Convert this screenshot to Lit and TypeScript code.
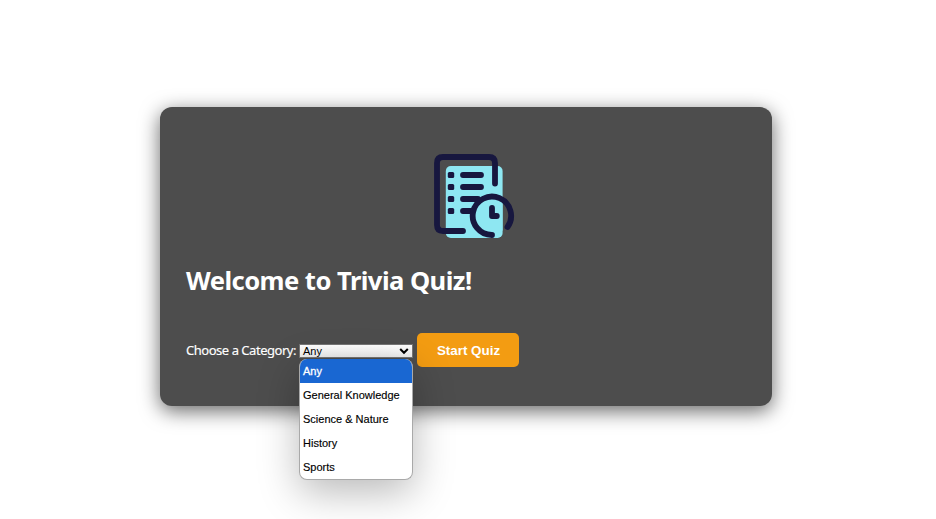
import { LitElement, html, css } from "lit";
import { customElement, property } from "lit/decorators.js";
import { classMap } from "lit/directives/class-map.js";

@customElement("quiz-logo")
class QuizLogo extends LitElement {
  static styles = css`
    :host { display: block; width: 100px; height: 100px; }
    svg { display: block; }
    .page { fill: #8ee7f2; }
    .dot { fill: #17173f; }
    .line { fill: none; stroke: #17173f; stroke-width: 5.8; stroke-linecap: round; stroke-linejoin: round; }
  `;
  render() {
    return html`<svg width="100" height="100" viewBox="0 0 100 100">
      <rect class="page" x="21.8" y="21" width="56.8" height="72" rx="5"></rect>
      <path class="line" d="M39 86H19Q13 86 13 80V18Q13 12 19 12H65Q71 12 71 18V38.5"></path>
      <rect class="dot" x="23.8" y="27" width="6.4" height="6" rx="1.5"></rect>
      <rect class="dot" x="23.8" y="39" width="6.4" height="6" rx="1.5"></rect>
      <rect class="dot" x="23.8" y="51" width="6.4" height="6" rx="1.5"></rect>
      <rect class="dot" x="23.8" y="63" width="6.4" height="6" rx="1.5"></rect>
      <path class="line" d="M39 30H57M39 42H57M39 54H54M39 66H48"></path>
      <path class="page" d="M78.6 56.2A18 18 0 1 0 78.6 85.4Z"></path>
      <path class="line" d="M68 90A19.2 19.2 0 1 1 83.5 82M68 63V71H72.8"></path>
    </svg>`;
  }
}

@customElement("category-select")
class CategorySelect extends LitElement {
  @property({ type: Array }) options: string[] = [];
  @property() value = "";
  static styles = css`
    :host { display: block; position: relative; width: 114px; height: 14px; font-family: "Liberation Sans", Arial, sans-serif; font-size: 11px; color: #000; }
    .field { box-sizing: border-box; height: 14px; display: flex; align-items: center; justify-content: space-between; padding: 0 3px 0 3px; border: 1px solid #767676; background: linear-gradient(#fff, #eee); line-height: 12px; }
    .menu { position: absolute; top: 15px; left: 0; width: 114px; box-sizing: border-box; background: #fff; border: 1px solid #a9a9a9; border-top: 0; border-radius: 8px; overflow: hidden; box-shadow: 0 12px 40px rgba(0, 0, 0, 0.28); }
    .option { height: 24px; line-height: 24px; padding-left: 3px; white-space: nowrap; -webkit-text-stroke: 0.15px currentColor; }
    .selected { background: #1967d2; color: #fff; -webkit-text-stroke-width: 0.3px; }
  `;
  render() {
    return html`<div class="field">
        <span>${this.value}</span>
        <svg width="10" height="8" viewBox="0 0 10 8"><path d="M1.2 2L5 5.8 8.8 2" fill="none" stroke="#000" stroke-width="2"></path></svg>
      </div>
      <div class="menu">
        ${this.options.map((o) => html`<div class=${classMap({ option: true, selected: o === this.value })}>${o}</div>`)}
      </div>`;
  }
}

@customElement("app-root")
class AppRoot extends LitElement {
  private categories = ["Any", "General Knowledge", "Science & Nature", "History", "Sports"];
  static styles = css`
    :host { display: flex; justify-content: center; box-sizing: border-box; height: 519px; padding: 107px 4px 0 0; background: #fff; overflow: hidden; font-family: "Noto Sans", "Open Sans", sans-serif; color: #fff; }
    .card { box-sizing: border-box; width: 612px; height: 299px; padding: 38px 26px 0; border-radius: 12px; background: #4d4d4d; box-shadow: 0 5px 20px rgba(0, 0, 0, 0.6); }
    .logo { margin: 0 auto 0 238px; }
    h1 { margin: 17px 0 0; font-size: 25.6px; line-height: 38px; font-weight: 700; letter-spacing: -0.55px; white-space: nowrap; }
    .controls { display: flex; align-items: center; margin-top: 33px; height: 34px; }
    label { width: 113px; font-size: 13px; letter-spacing: -0.47px; white-space: nowrap; -webkit-text-stroke: 0.15px currentColor; }
    category-select { margin-top: 1px; }
    button { width: 102px; height: 34px; margin-left: 4px; padding: 0 0 0 1px; border: 0; border-radius: 5px; background: #f39c12; color: #fff; font: bold 13.4px "Liberation Sans", Arial, sans-serif; }
  `;
  render() {
    return html`<main class="card">
      <quiz-logo class="logo"></quiz-logo>
      <h1>Welcome to Trivia Quiz!</h1>
      <div class="controls">
        <label>Choose a Category:</label>
        <category-select .options=${this.categories} value="Any"></category-select>
        <button>Start Quiz</button>
      </div>
    </main>`;
  }
}
